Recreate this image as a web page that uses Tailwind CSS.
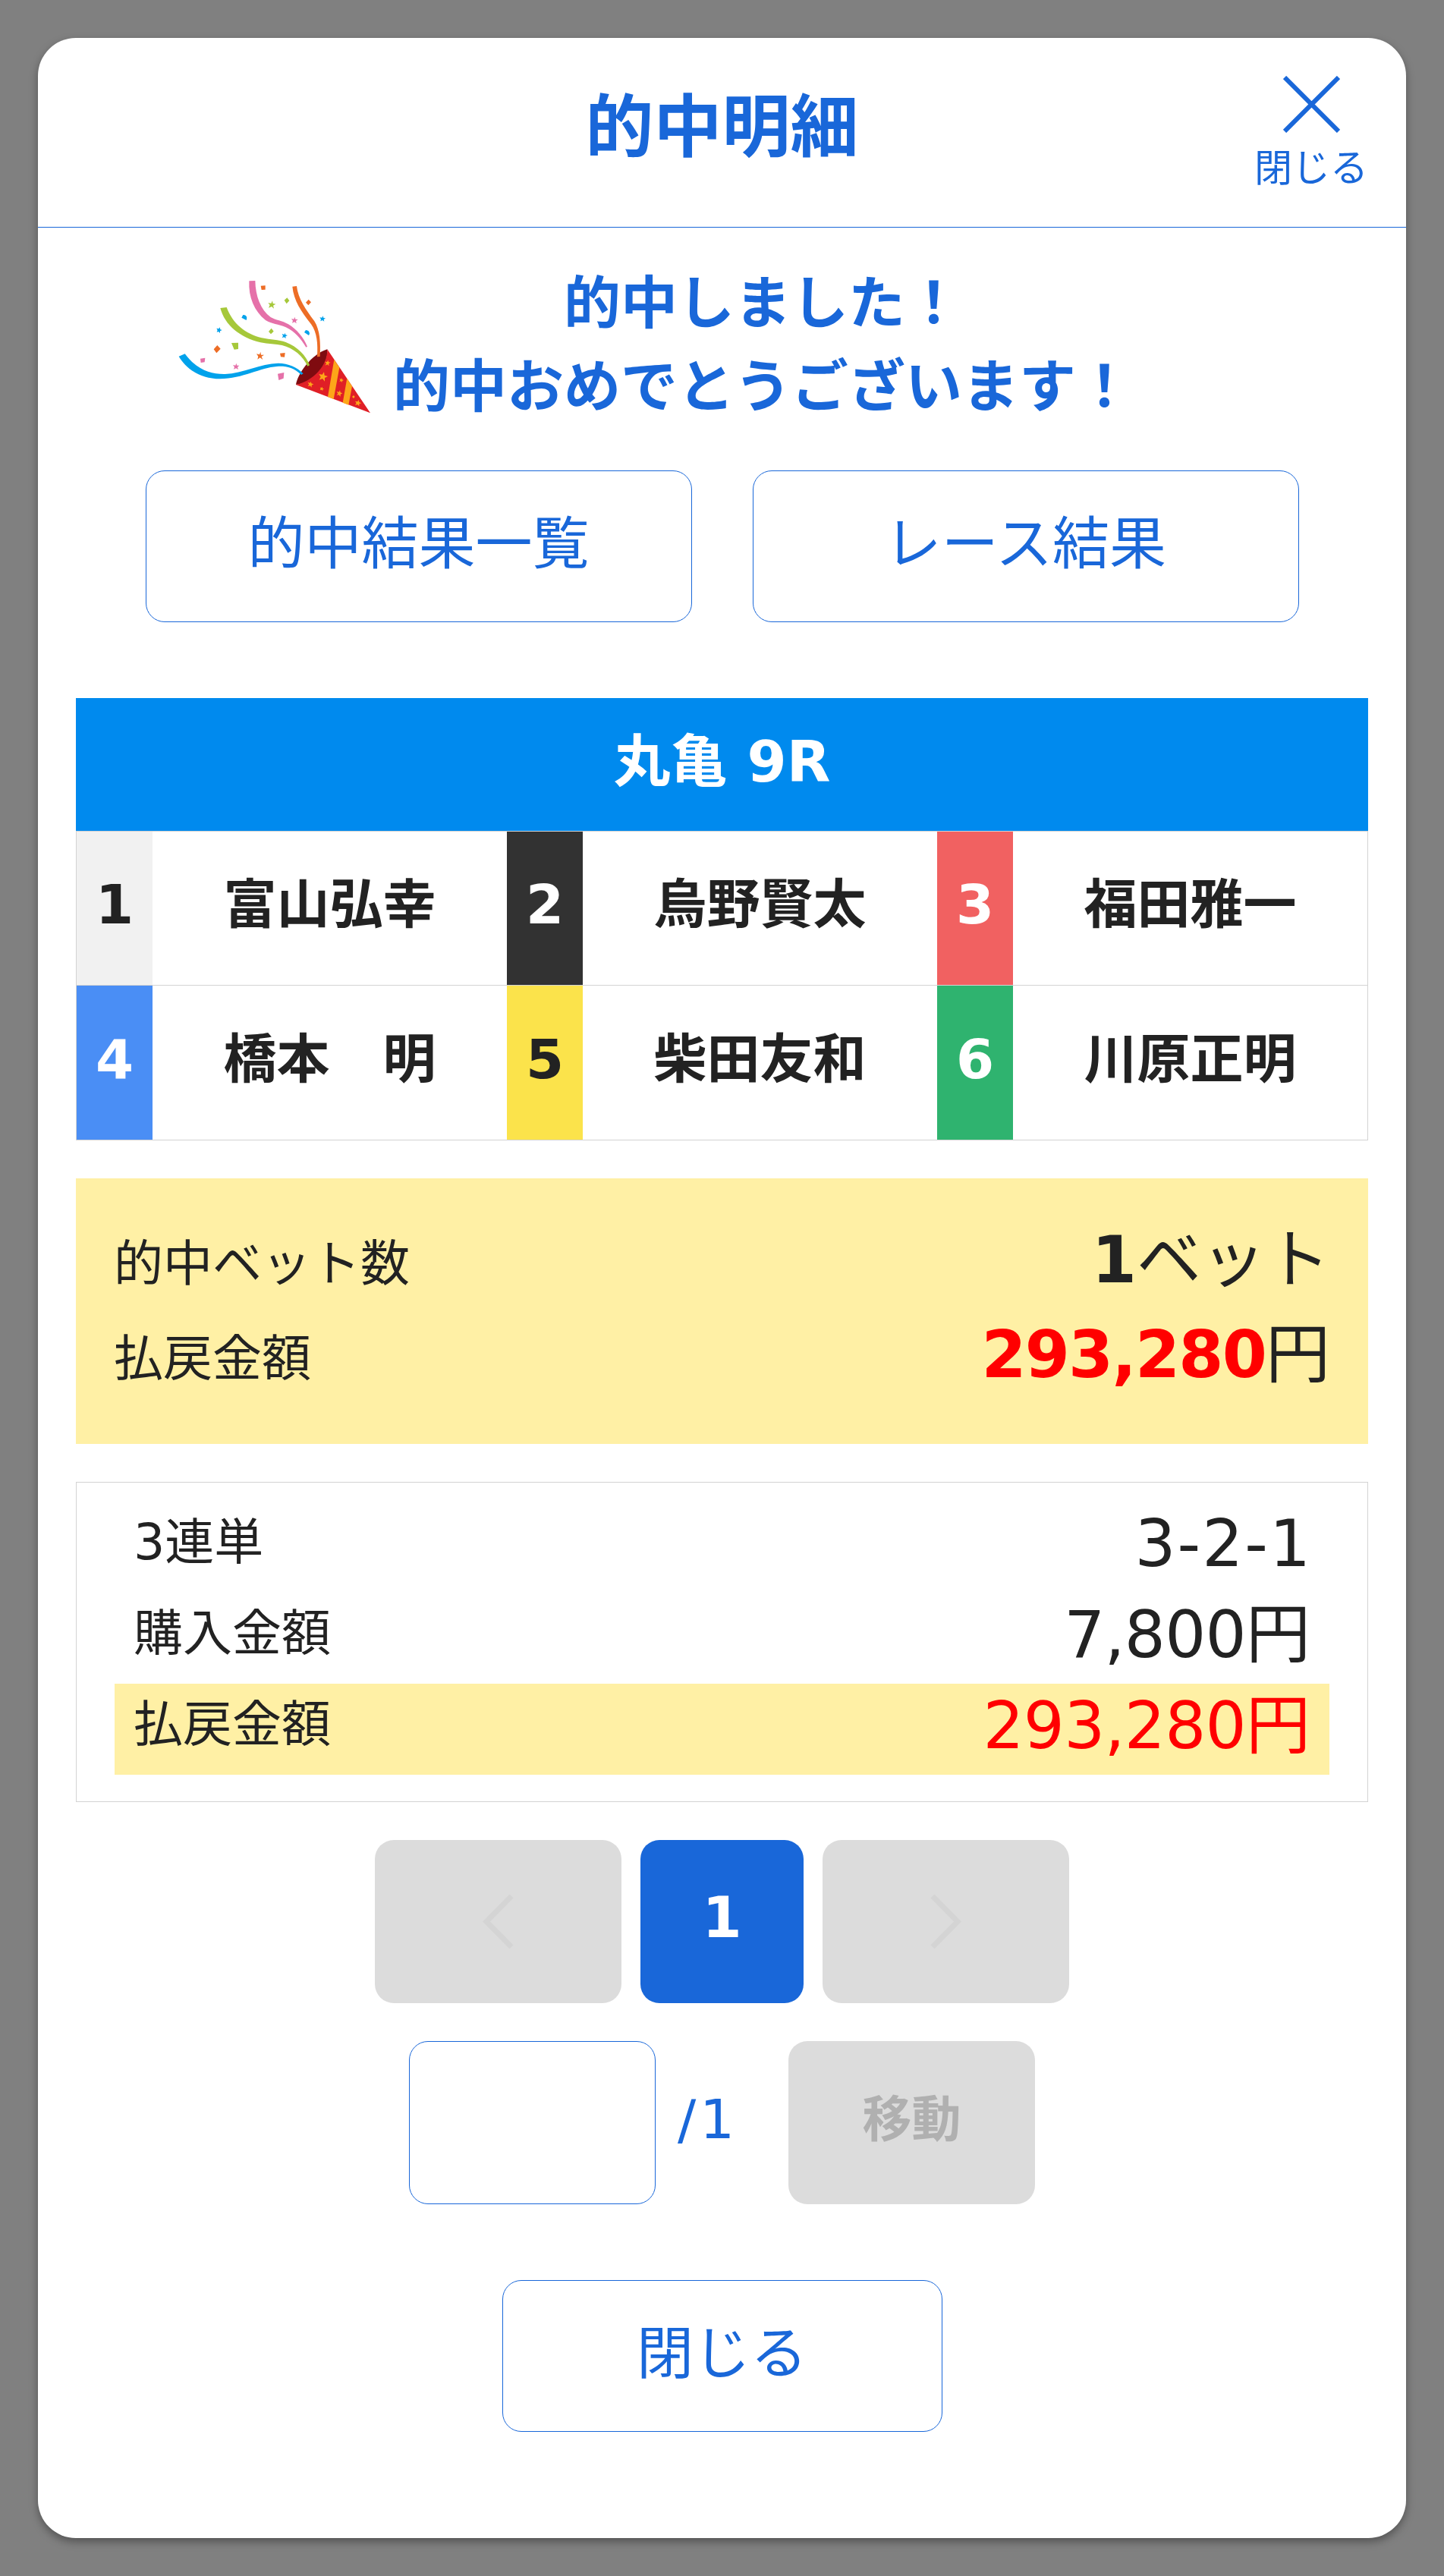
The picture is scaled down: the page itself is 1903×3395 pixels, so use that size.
<!DOCTYPE html>
<html lang="ja">
  <head>
    <meta charset="UTF-8" />
    <meta name="viewport" content="width=device-width, initial-scale=1.0" />
    <title>的中明細</title>
    <script src="https://cdn.jsdelivr.net/npm/@tailwindcss/browser@4"></script>
  </head>
  <body class="bg-[#808080] font-['DejaVu_Sans','Noto_Sans_CJK_JP',sans-serif] text-[#222]">
    <div class="h-[3395px] p-[50px]">
      <div class="h-[3295px] rounded-[50px] bg-white shadow-[0_5px_12px_rgba(0,0,0,0.35)]">
        <!-- header -->
        <div class="relative flex h-[250px] justify-center border-b border-[#1967d9] pt-[73px] text-[#1967d9]">
          <h1 class="text-[90px] leading-[90px] font-bold">的中明細</h1>
          <button class="absolute top-[50px] right-[50px] flex flex-col items-center">
            <svg class="size-[75px]" viewBox="0 0 75 75" fill="none" stroke="currentColor" stroke-width="6">
              <path d="M2 2L73 73M73 2L2 73" />
            </svg>
            <span class="mt-[22px] text-[50px] leading-[50px]">閉じる</span>
          </button>
        </div>

        <!-- message -->
        <div class="flex h-[210px] mt-[50px] pl-[170px] text-[#1967d9]">
          <svg class="h-[210px] w-[290px]" viewBox="0 0 870 630">
            <path fill="#7f0b10" d="M510 471C515 432 570 350 634 331C640 385 590 465 510 471Z" />
            <path fill="#e01f26" d="M634 331L804 583L510 471C580 455 635 395 634 331Z" />
            <path fill="#fda619" d="M661 372L682 403L659 528L636 519ZM712 446L732 477L718 551L695 542Z" />
            <path fill="#00a2eb" d="M47 359L71 349C120 415 175 430 230 429C300 427 370 387 440 386C480 386 515 402 539 427L531 432C500 402 470 397 435 399C370 403 300 447 210 448C130 447 75 407 47 359Z" />
            <path fill="#a6c83a" d="M211 168L236 165C260 230 310 270 375 286C410 294 440 293 470 303C515 320 550 355 564 394L556 398C540 360 500 325 455 315C430 310 400 310 370 304C290 285 228 235 211 168Z" />
            <path fill="#e571a9" d="M325 61L349 60C350 120 370 175 410 204C430 216 455 217 480 232C515 253 540 285 555 320L550 323C530 290 505 260 470 244C440 230 415 232 390 216C345 180 322 125 325 61Z" />
            <path fill="#ed6d26" d="M496 83L513 81C518 130 550 175 583 220C605 255 608 305 605 360L594 361C597 310 594 265 570 232C530 180 502 140 496 83Z" />
            <!-- confetti -->
            <g fill="#ed6d26">
              <path d="M371 80L389 79V95L374 96ZM560 134L570 145L559 157L549 146ZM199 315L212 329L196 346L185 331ZM447 347L467 345L465 362L450 361Z" />
              <path d="M370 341L372 353L384 353L374 360L379 372L368 364L358 371L361 359L354 349L366 352Z" />
            </g>
            <g fill="#a6c83a">
              <path d="M475 127L484 139L473 151L464 137ZM413 248L422 260L411 271L402 261ZM255 306L282 305V330L266 332Z" />
              <path d="M417 139L419 150L430 152L420 158L423 170L414 162L402 167L407 156L400 148L412 149Z" />
            </g>
            <g fill="#e571a9">
              <path d="M132 368L151 365L149 382L134 384ZM438 428L463 423L461 446L442 453Z" />
              <path d="M505 203L508 212L518 213L510 219L512 229L504 223L495 227L498 218L492 210L502 212ZM274 386L277 395L286 395L279 402L282 411L273 406L264 410L267 401L261 393L271 395Z" />
            </g>
            <g fill="#00a2eb">
              <path d="M301 195Q315 195 316 207L314 216L295 206ZM549 255Q563 256 564 269L561 276L543 264Z" />
              <path d="M617 199L619 207L627 208L620 213L622 221L615 216L607 220L609 212L604 205L613 206ZM209 244L211 253L218 255L210 259L210 267L204 261L197 263L200 255L196 248L205 250ZM467 266L469 274L477 276L469 280L470 288L463 283L455 286L459 278L455 270L464 273Z" />
            </g>
            <g fill="#fda619">
              <path d="M637 374L639 382L647 383L639 388L641 397L634 391L626 395L630 386L624 380L633 381ZM621 421L623 434L636 438L624 444L624 458L615 447L602 452L608 440L601 429L614 431ZM569 458L571 466L580 469L572 473L572 482L566 475L557 478L562 470L557 462L566 464ZM614 479L615 485L621 487L616 490L616 495L611 491L605 493L608 487L605 482L611 483ZM691 445L693 451L699 453L693 456L693 462L688 457L682 459L685 453L682 447L688 449ZM684 493L686 502L694 505L686 509L686 518L679 511L671 514L676 506L671 498L680 500ZM758 531L760 540L769 544L760 547L760 556L753 549L744 552L749 544L744 536L754 538ZM738 513L743 519L738 525L732 519Z" />
            </g>
          </svg>
          <p class="-mt-[5px] ml-[8px] w-[975px] text-center text-[75px] leading-[110px] font-bold whitespace-nowrap">
            的中しました！<br />的中おめでとうございます！
          </p>
        </div>

        <div class="mt-[60px] flex justify-center gap-[80px] text-[75px] leading-[75px] text-[#1967d9]">
          <button class="h-[200px] w-[720px] rounded-[25px] border border-[#1967d9] pb-[6px]">的中結果一覧</button>
          <button class="h-[200px] w-[720px] rounded-[25px] border border-[#1967d9] pb-[6px]">レース結果</button>
        </div>

        <!-- race -->
        <div class="mx-[50px] mt-[100px] text-[70px] leading-[70px] font-bold">
          <div class="flex h-[175px] items-center justify-center bg-[#008aee] pb-[8px] text-[75px] text-white">丸亀 9R</div>
          <div class="grid h-[408px] grid-cols-3 grid-rows-2 border border-[#d3d3d3]">
            <div class="flex border-b border-[#d3d3d3]">
              <div class="flex w-[100px] items-center justify-center bg-[#f1f1f1] pb-[10px] text-[72px]">1</div>
              <div class="flex flex-1 items-center justify-center pb-[8px]">富山弘幸</div>
            </div>
            <div class="flex border-b border-[#d3d3d3]">
              <div class="flex w-[100px] items-center justify-center bg-[#323232] pb-[10px] text-[72px] text-white">2</div>
              <div class="flex flex-1 items-center justify-center pb-[8px]">烏野賢太</div>
            </div>
            <div class="flex border-b border-[#d3d3d3]">
              <div class="flex w-[100px] items-center justify-center bg-[#f16161] pb-[10px] text-[72px] text-white">3</div>
              <div class="flex flex-1 items-center justify-center pb-[8px]">福田雅一</div>
            </div>
            <div class="flex">
              <div class="flex w-[100px] items-center justify-center bg-[#4a8ef5] pb-[10px] text-[72px] text-white">4</div>
              <div class="flex flex-1 items-center justify-center pb-[8px]">橋本　明</div>
            </div>
            <div class="flex">
              <div class="flex w-[100px] items-center justify-center bg-[#fbe34b] pb-[10px] text-[72px]">5</div>
              <div class="flex flex-1 items-center justify-center pb-[8px]">柴田友和</div>
            </div>
            <div class="flex">
              <div class="flex w-[100px] items-center justify-center bg-[#2fb36f] pb-[10px] text-[72px] text-white">6</div>
              <div class="flex flex-1 items-center justify-center pb-[8px]">川原正明</div>
            </div>
          </div>
        </div>

        <!-- total -->
        <div class="mx-[50px] mt-[50px] h-[350px] bg-[#fff0a5] px-[50px] pt-[50px] text-[65px]">
          <div class="flex h-[125px] items-center justify-between">
            <div class="leading-[125px]">的中ベット数</div>
            <div class="pb-[10px] text-[85px] leading-[115px]"><span class="font-bold">1</span>ベット</div>
          </div>
          <div class="flex h-[125px] items-center justify-between">
            <div class="leading-[125px]">払戻金額</div>
            <div class="pb-[10px] text-[85px] leading-[115px]"><span class="font-bold tracking-[-1.8px] text-[red]">293,280</span>円</div>
          </div>
        </div>

        <!-- bet detail -->
        <div class="mx-[50px] mt-[50px] h-[422px] border border-[#d3d3d3] px-[50px] pt-[25px] text-[65px]">
          <div class="flex h-[120px] items-center justify-between px-[25px]">
            <div class="pb-[12px] leading-[108px]">3連単</div>
            <div class="-mr-[2px] pb-[8px] text-[85px] leading-[112px] tracking-[2px]">3-2-1</div>
          </div>
          <div class="flex h-[120px] items-center justify-between px-[25px]">
            <div class="pb-[12px] leading-[108px]">購入金額</div>
            <div class="pb-[8px] text-[85px] leading-[112px]"><span class="tracking-[-0.7px]">7,800</span>円</div>
          </div>
          <div class="flex h-[120px] items-center justify-between bg-[#fff0a5] px-[25px]">
            <div class="pb-[12px] leading-[108px]">払戻金額</div>
            <div class="pb-[8px] text-[85px] leading-[112px] text-[red]"><span class="tracking-[-0.7px]">293,280</span>円</div>
          </div>
        </div>

        <!-- pager -->
        <div class="mt-[50px] flex justify-center gap-[25px]">
          <button class="flex h-[215px] w-[325px] items-center justify-center rounded-[25px] bg-[#dcdcdc]">
            <svg class="h-[71px] w-[41px]" viewBox="0 0 41 71" fill="none" stroke="#d4d4d4" stroke-width="7">
              <path d="M38 2L5 35.500L38 69" />
            </svg>
          </button>
          <button class="h-[215px] w-[215px] rounded-[25px] bg-[#1967d9] pb-[10px] text-[75px] leading-[75px] font-bold text-white">1</button>
          <button class="flex h-[215px] w-[325px] items-center justify-center rounded-[25px] bg-[#dcdcdc]">
            <svg class="h-[71px] w-[41px]" viewBox="0 0 41 71" fill="none" stroke="#d4d4d4" stroke-width="7">
              <path d="M3 2L36 35.500L3 69" />
            </svg>
          </button>
        </div>
        <div class="mt-[50px] flex h-[215px] items-center justify-center">
          <input type="text" class="h-[215px] w-[325px] rounded-[25px] border border-[#1967d9]" />
          <div class="w-[175px] pb-[10px] pl-[29px] text-[72px] leading-[72px] tracking-[5px] text-[#1967d9]">/1</div>
          <button class="h-[215px] w-[325px] rounded-[25px] bg-[#dcdcdc] pb-[8px] text-[65px] leading-[65px] font-bold text-[#b0b0b0]">移動</button>
        </div>
        <div class="mt-[100px] flex justify-center">
          <button class="h-[200px] w-[580px] rounded-[25px] border border-[#1967d9] pb-[6px] text-[75px] leading-[75px] text-[#1967d9]">閉じる</button>
        </div>
      </div>
    </div>
  </body>
</html>
